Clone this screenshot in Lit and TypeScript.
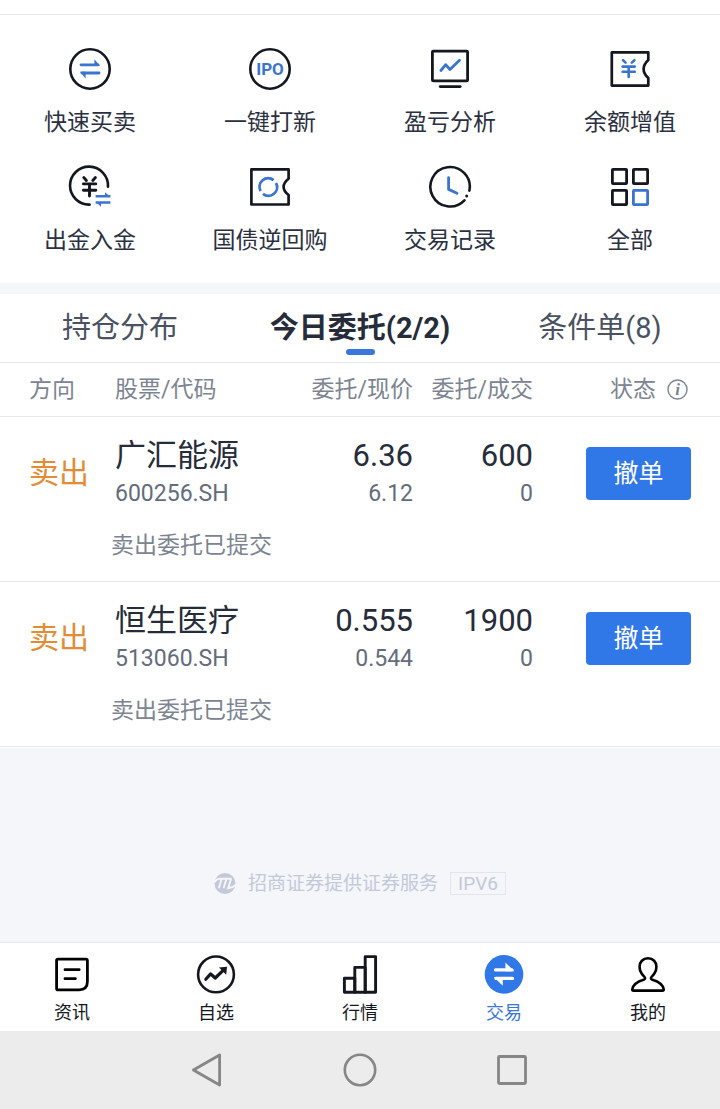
import { LitElement, html, css, svg, nothing } from "lit";
import { customElement, state } from "lit/decorators.js";
import { classMap } from "lit/directives/class-map.js";

const INK = "#14171f";
const BLUE = "#3a74cf";

const quickIcons = {
  swap: svg`
    <circle cx="22" cy="22" r="19.7" fill="none" stroke=${INK} stroke-width="2.6" />
    <g fill="none" stroke=${BLUE} stroke-width="2.8" stroke-linecap="round">
      <path d="M13 17.8H30" /><path d="M14 26H31" />
    </g>
    <path d="M26.4 12.2L32.2 19H26.4ZM17.6 31.6L11.8 24.8H17.6Z" fill=${BLUE} />`,
  ipo: svg`
    <circle cx="22" cy="22" r="19.7" fill="none" stroke=${INK} stroke-width="2.6" />
    <text class="ipo" x="22" y="28" text-anchor="middle" fill=${BLUE}>IPO</text>`,
  monitor: svg`
    <g fill="none" stroke=${INK} stroke-width="2.8" stroke-linecap="round">
      <rect x="4.4" y="4.1" width="35.2" height="29.8" rx="1" />
      <path d="M12.2 39.6H32.2" />
    </g>
    <path d="M12.9 23.5L17.7 17.7L22 22.5L31.5 13.2" fill="none" stroke=${BLUE} stroke-width="2.8" stroke-linecap="round" stroke-linejoin="round" />`,
  coupon: svg`
    <path d="M4.6 5.4H40.3V13C37.5 15.6 35.6 17.6 35.6 22S37.5 28.6 40.3 31V38.6H3.8V5.4Z" fill="none" stroke=${INK} stroke-width="2.7" stroke-linejoin="round" />
    <path d="M15 13.2L17.6 15.6M26.4 13.2L23.8 15.6M14.6 19.6H26.8M14.6 24.8H26.8M20.7 19.6V30" fill="none" stroke=${BLUE} stroke-width="2.6" stroke-linecap="round" />`,
  cash: svg`
    <path d="M40 21.7A19 19 0 1 0 21.6 39.6" fill="none" stroke=${INK} stroke-width="2.6" stroke-linecap="round" />
    <path d="M15.8 12.6L18.4 15.4M27.4 12.6L24.8 15.4M15.4 18.9H27.8M15.4 25.2H27.8M21.5 18.9V31" fill="none" stroke=${INK} stroke-width="2.9" stroke-linecap="round" />
    <path d="M27.6 31.3H42.4M27.6 37.5H42.4" fill="none" stroke=${BLUE} stroke-width="2.6" />
    <path d="M37 27.2L42.4 32H37ZM33 41.8L28 37H33Z" fill=${BLUE} />`,
  bond: svg`
    <path d="M3.4 4.4H40.6V13.8C37.5 16.2 35.6 18.2 35.6 22S37.5 27.6 40.6 30V39.5H3.4Z" fill="none" stroke=${INK} stroke-width="2.7" stroke-linejoin="round" />
    <path d="M25.6 15.2A8.6 8.6 0 0 0 12.6 26M15 28.8A8.6 8.6 0 0 0 28 18" fill="none" stroke=${BLUE} stroke-width="2.8" />`,
  clock: svg`
    <path d="M41.4 25.6A19.7 19.7 0 1 0 36.4 35.3" fill="none" stroke=${INK} stroke-width="2.6" stroke-linecap="round" />
    <circle cx="38.7" cy="31" r="1.5" fill=${INK} />
    <path d="M20.6 12.6V24.4L29 28.2" fill="none" stroke=${BLUE} stroke-width="2.8" stroke-linecap="round" stroke-linejoin="round" />`,
  all: svg`
    <g fill="none" stroke=${INK} stroke-width="2.8">
      <rect x="4.4" y="4.4" width="14.2" height="14.2" rx="0.6" />
      <rect x="25.4" y="4.4" width="14.2" height="14.2" rx="0.6" />
      <rect x="4.4" y="25.4" width="14.2" height="14.2" rx="0.6" />
      <rect x="25.4" y="25.4" width="14.2" height="14.2" rx="0.6" stroke=${BLUE} />
    </g>`,
};

const navIcons = {
  news: svg`
    <path d="M6 5.2H33.8Q35.4 5.2 35.4 6.8V27.5Q35.4 35.8 27 35.8H6Q4.6 35.8 4.6 34.4V6.6Q4.6 5.2 6 5.2Z" fill="none" stroke="#000" stroke-width="2.8" />
    <path d="M13 15.7H27.2M13 24.7H23.4" fill="none" stroke="#000" stroke-width="2.8" stroke-linecap="round" />`,
  watch: svg`
    <circle cx="20" cy="20.4" r="17.9" fill="none" stroke=${INK} stroke-width="2.6" />
    <path d="M9.8 25.2L14.6 19.9L19.2 24L27.2 16.3" fill="none" stroke=${INK} stroke-width="3.2" stroke-linecap="round" stroke-linejoin="round" />
    <path d="M23 13.6L31 12.8L30.2 20.8Z" fill=${INK} />`,
  market: svg`
    <g fill="none" stroke=${INK} stroke-width="2.9" stroke-linejoin="round">
      <rect x="4.4" y="24.3" width="10.4" height="14" />
      <rect x="14.8" y="13.4" width="10.4" height="24.9" />
      <rect x="25.2" y="2.6" width="10.4" height="35.7" />
    </g>`,
  trade: svg`
    <circle cx="20" cy="20.4" r="19.3" fill="#3077e8" />
    <path d="M11.4 15.8H28M12 24.4H28.6" fill="none" stroke="#fff" stroke-width="3.2" stroke-linecap="round" />
    <path d="M21.4 8.4L30.4 17.3H21.4ZM18.8 31.8L9.8 23H18.8Z" fill="#fff" />`,
  me: svg`
    <path d="M20 4.3C14.8 4.3 11.6 8 11.6 12.6C11.6 16.4 13.3 20 16 22.4C17.8 24 17.2 25.2 15.6 25.8C9.5 27.6 5.2 30.6 4.3 35.2Q4 36.6 5.4 36.6H34.6Q36 36.6 35.7 35.2C34.8 30.6 30.5 27.6 24.4 25.8C22.8 25.2 22.2 24 24 22.4C26.7 20 28.4 16.4 28.4 12.6C28.4 8 25.2 4.3 20 4.3Z" fill="none" stroke="#000" stroke-width="2.6" stroke-linejoin="round" />`,
};

const QUICK = [
  ["快速买卖", quickIcons.swap],
  ["一键打新", quickIcons.ipo],
  ["盈亏分析", quickIcons.monitor],
  ["余额增值", quickIcons.coupon],
  ["出金入金", quickIcons.cash],
  ["国债逆回购", quickIcons.bond],
  ["交易记录", quickIcons.clock],
  ["全部", quickIcons.all],
] as const;

const TABS = ["持仓分布", "今日委托(2/2)", "条件单(8)"];

const ORDERS = [
  { side: "卖出", name: "广汇能源", code: "600256.SH", price: "6.36", last: "6.12", qty: "600", filled: "0", note: "卖出委托已提交" },
  { side: "卖出", name: "恒生医疗", code: "513060.SH", price: "0.555", last: "0.544", qty: "1900", filled: "0", note: "卖出委托已提交" },
];

const NAV = [
  ["资讯", navIcons.news],
  ["自选", navIcons.watch],
  ["行情", navIcons.market],
  ["交易", navIcons.trade],
  ["我的", navIcons.me],
] as const;

const reset = css`
  * { box-sizing: border-box; }
  button {
    font: inherit;
    color: inherit;
    background: none;
    border: 0;
    padding: 0;
    margin: 0;
    cursor: pointer;
  }
  svg { display: block; }
`;

@customElement("quick-actions")
export class QuickActions extends LitElement {
  static styles = [reset, css`
    :host { display: block; }
    .grid {
      display: grid;
      grid-template-columns: repeat(4, 1fr);
      row-gap: 27px;
      padding: 32px 0 27px;
    }
    .item {
      display: flex;
      flex-direction: column;
      align-items: center;
      gap: 17px;
      font-size: 23px;
      line-height: 30px;
      color: #2a3040;
    }
    .ipo { font: 700 17px Roboto, sans-serif; }
  `];

  render() {
    return html`<nav class="grid">
      ${QUICK.map(([label, icon]) => html`
        <button class="item" type="button">
          <svg width="44" height="44" viewBox="0 0 44 44" aria-hidden="true">${icon}</svg>
          <span>${label}</span>
        </button>`)}
    </nav>`;
  }
}

@customElement("order-table")
export class OrderTable extends LitElement {
  static styles = [reset, css`
    :host { display: block; }
    .table {
      width: 100%;
      table-layout: fixed;
      border-collapse: separate;
      border-spacing: 0;
      text-align: left;
    }
    .c-side { width: 115px; }
    .c-num { width: 120px; }
    .c-state { width: 187px; }
    th {
      padding: 12px 0 11px;
      font-size: 23px;
      line-height: 30px;
      font-weight: inherit;
      color: #7c8492;
      border-bottom: 1px solid #e6e8eb;
      white-space: nowrap;
    }
    td { padding: 0; vertical-align: middle; }
    .side { padding-left: 29px; }
    .num { text-align: right; }
    .state { padding-right: 29px; text-align: right; }
    th.state { padding-right: 32px; }
    .state-head {
      display: flex;
      align-items: center;
      justify-content: flex-end;
      gap: 11px;
    }
    .direction { padding-bottom: 2px; font-size: 30px; line-height: 40px; color: #e28c35; }
    .cell { padding: 19px 0 18px; }
    .main { font-size: 31px; line-height: 40px; color: #262c3a; }
    .sub { font-size: 23px; line-height: 36px; color: #646c7c; }
    .note {
      padding: 1px 0 20px 111px;
      font-size: 23px;
      line-height: 30px;
      color: #7c8492;
      border-bottom: 1px solid #e6e8eb;
    }
    .cancel {
      width: 105px;
      height: 53px;
      border-radius: 4px;
      background: #3077e8;
      color: #fff;
      font-size: 25px;
      line-height: 36px;
      vertical-align: middle;
    }
    .info-letter { font: italic 700 17px "Liberation Serif", serif; }
  `];

  render() {
    return html`<table class="table">
      <colgroup>
        <col class="c-side" /><col /><col class="c-num" /><col class="c-num" /><col class="c-state" />
      </colgroup>
      <thead>
        <tr>
          <th class="side" scope="col">方向</th>
          <th scope="col">股票/代码</th>
          <th class="num" scope="col">委托/现价</th>
          <th class="num" scope="col">委托/成交</th>
          <th class="state" scope="col">
            <div class="state-head">
              <span>状态</span>
              <button type="button" aria-label="状态说明">
                <svg width="21" height="22" viewBox="0 0 21 22">
                  <circle cx="10.5" cy="10.5" r="9.5" fill="none" stroke="#7c8492" stroke-width="1.4" />
                  <text class="info-letter" x="10.5" y="16" text-anchor="middle" fill="#7c8492">i</text>
                </svg>
              </button>
            </div>
          </th>
        </tr>
      </thead>
      <tbody>
        ${ORDERS.map((o) => html`
          <tr>
            <td class="side direction">${o.side}</td>
            <td class="cell"><div class="main">${o.name}</div><div class="sub">${o.code}</div></td>
            <td class="cell num"><div class="main">${o.price}</div><div class="sub">${o.last}</div></td>
            <td class="cell num"><div class="main">${o.qty}</div><div class="sub">${o.filled}</div></td>
            <td class="state"><button class="cancel" type="button">撤单</button></td>
          </tr>
          <tr><td class="note" colspan="5">${o.note}</td></tr>`)}
      </tbody>
    </table>`;
  }
}

@customElement("app-root")
export class AppRoot extends LitElement {
  @state() private tab = 1;

  static styles = [reset, css`
    :host {
      display: flex;
      flex-direction: column;
      min-height: 100vh;
      background: #f4f6fa;
      font-family: Roboto, "Noto Sans CJK SC", sans-serif;
      font-weight: 400;
    }
    .top { background: #fff; padding-top: 14px; }
    .quick { border-top: 1px solid #e8e8e8; }
    .orders { margin-top: 11px; padding-bottom: 1px; background: #fff; }
    .tabs {
      display: grid;
      grid-template-columns: repeat(3, 1fr);
      border-bottom: 1px solid #e6e8eb;
    }
    .tab {
      display: flex;
      flex-direction: column;
      align-items: center;
      gap: 1px;
      padding: 14px 0 7px;
      font-size: 29px;
      line-height: 40px;
      color: #4a5160;
    }
    .tab.on { font-weight: 700; color: #262c3a; }
    .bar { width: 29px; height: 6px; border-radius: 3px; }
    .tab.on .bar { background: #3a76dc; }
    .footer {
      flex: 1;
      display: flex;
      align-items: flex-start;
      justify-content: center;
      gap: 12px;
      padding: 124px 0 47px;
      font-size: 19px;
      line-height: 23px;
      color: #c3c9d9;
    }
    .badge { border: 1px solid #e2e5ec; padding: 0 7px; line-height: 21px; }
    .bottom {
      display: grid;
      grid-template-columns: repeat(5, 1fr);
      background: #fff;
      border-top: 1px solid #e6e8eb;
    }
    .nav-item {
      display: flex;
      flex-direction: column;
      align-items: center;
      gap: 7px;
      padding: 11px 0 6px;
      font-size: 18px;
      line-height: 24px;
      color: #14171f;
    }
    .nav-item.on { color: #3a76dc; }
    .system {
      display: flex;
      justify-content: center;
      gap: 117px;
      padding: 21px 0;
      background: #ececec;
    }
  `];

  render() {
    return html`
      <header class="top"><quick-actions class="quick"></quick-actions></header>
      <section class="orders">
        <div class="tabs" role="tablist">
          ${TABS.map((t, i) => html`
            <button
              type="button"
              role="tab"
              aria-selected=${i === this.tab ? "true" : "false"}
              class=${classMap({ tab: true, on: i === this.tab })}
              @click=${() => (this.tab = i)}
            ><span>${t}</span><span class="bar"></span></button>`)}
        </div>
        <order-table></order-table>
      </section>
      <footer class="footer">
        <svg width="22" height="23" viewBox="0 0 22 23" aria-hidden="true">
          <circle cx="11" cy="11.5" r="10.5" fill="#c3c9d9" />
          <path d="M0 10.5Q2.5 6.8 6 6.8H17M7.6 7L4.8 16.2M12.4 7L9.6 16.2M17.2 6.2L14.2 16.2Q18.6 16 22 12.6" fill="none" stroke="#f4f6fa" stroke-width="1.9" />
        </svg>
        <span>招商证券提供证券服务</span>
        <span class="badge">IPV6</span>
      </footer>
      <nav class="bottom">
        ${NAV.map(([label, icon], i) => html`
          <button
            type="button"
            class=${classMap({ "nav-item": true, on: i === 3 })}
            aria-current=${i === 3 ? "page" : nothing}
          >
            <svg width="40" height="40" viewBox="0 0 40 40" aria-hidden="true">${icon}</svg>
            <span>${label}</span>
          </button>`)}
      </nav>
      <div class="system">
        <button type="button" aria-label="返回">
          <svg width="36" height="36" viewBox="0 0 36 36" fill="none" stroke="#868686" stroke-width="2.8" stroke-linejoin="round">
            <path d="M4.4 18L30.6 3V33Z" />
          </svg>
        </button>
        <button type="button" aria-label="主页">
          <svg width="36" height="36" viewBox="0 0 36 36" fill="none" stroke="#868686" stroke-width="2.6">
            <circle cx="18" cy="18" r="15.2" />
          </svg>
        </button>
        <button type="button" aria-label="最近任务">
          <svg width="36" height="36" viewBox="0 0 36 36" fill="none" stroke="#868686" stroke-width="2.8">
            <rect x="3.5" y="4.5" width="27" height="27" rx="1" />
          </svg>
        </button>
      </div>`;
  }
}
